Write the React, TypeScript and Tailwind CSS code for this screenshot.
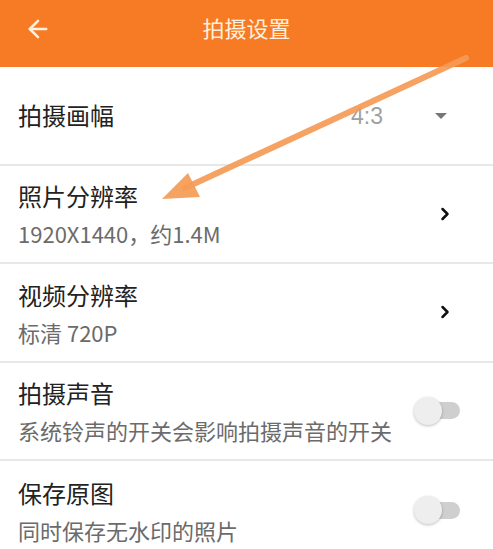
import { ArrowLeft, ChevronRight } from "lucide-react";

const cjk = { fontFamily: '"Noto Sans CJK SC", "Noto Sans", sans-serif' };

function Toggle() {
  return (
    <div className="relative h-[28px] w-[46px] flex items-center">
      <div className="ml-[10px] h-[17px] w-[36px] rounded-full bg-[#cfcfcf]" />
      <div className="absolute left-0 top-0 h-[28px] w-[28px] rounded-full bg-[#eeeeee] shadow-[0_1px_3px_rgba(0,0,0,0.25)]" />
    </div>
  );
}

function Row({
  title,
  sub,
  right,
  last,
}: {
  title: string;
  sub?: string;
  right: React.ReactNode;
  last?: boolean;
}) {
  return (
    <div
      className={`flex items-center justify-between pl-[18px] pr-[33px] h-[98.5px] ${
        last ? "" : "border-b-2 border-[#e8e8e8]"
      }`}
    >
      <div className="flex flex-col gap-[11px]">
        <div className="text-[24px] leading-[28px] text-[#222]">{title}</div>
        {sub && <div className="text-[22px] leading-[24px] text-[#6b6b6b]">{sub}</div>}
      </div>
      {right}
    </div>
  );
}

export default function App() {
  return (
    <div className="relative w-[493px] h-[549px] overflow-hidden bg-white" style={cjk}>
      <div className="h-[67px] bg-[#f77b25] flex items-center pb-[10px] px-[24px] relative">
        <ArrowLeft className="text-[#fdf0dc]" size={28} strokeWidth={2.2} />
        <div className="absolute left-0 right-0 top-[12px] text-center text-[22px] leading-[30px] text-[#fdf0dc]">
          拍摄设置
        </div>
      </div>

      <Row
        title="拍摄画幅"
        right={
          <div className="flex items-center gap-[52px] mr-[13px] pt-[2px]">
            <span className="text-[23px] text-[#a0a0a0]" style={{ fontFamily: '"Liberation Sans", sans-serif' }}>
              4:3
            </span>
            <div className="w-0 h-0 border-l-[6px] border-r-[6px] border-t-[6px] border-l-transparent border-r-transparent border-t-[#777]" />
          </div>
        }
      />
      <Row
        title="照片分辨率"
        sub="1920X1440，约1.4M"
        right={<ChevronRight className="text-[#111] mr-[5px]" size={20} strokeWidth={3} />}
      />
      <Row
        title="视频分辨率"
        sub="标清 720P"
        right={<ChevronRight className="text-[#111] mr-[5px]" size={20} strokeWidth={3} />}
      />
      <Row title="拍摄声音" sub="系统铃声的开关会影响拍摄声音的开关" right={<Toggle />} />
      <Row title="保存原图" sub="同时保存无水印的照片" right={<Toggle />} last />

      <svg className="absolute left-0 top-0 pointer-events-none" width="493" height="549">
        <line x1="466" y1="58" x2="185" y2="188" stroke="#f59b55" strokeWidth="6" strokeLinecap="round" opacity="0.92" />
        <polygon points="162,199 188,173 200,197" fill="#f59b55" opacity="0.92" />
      </svg>
    </div>
  );
}
